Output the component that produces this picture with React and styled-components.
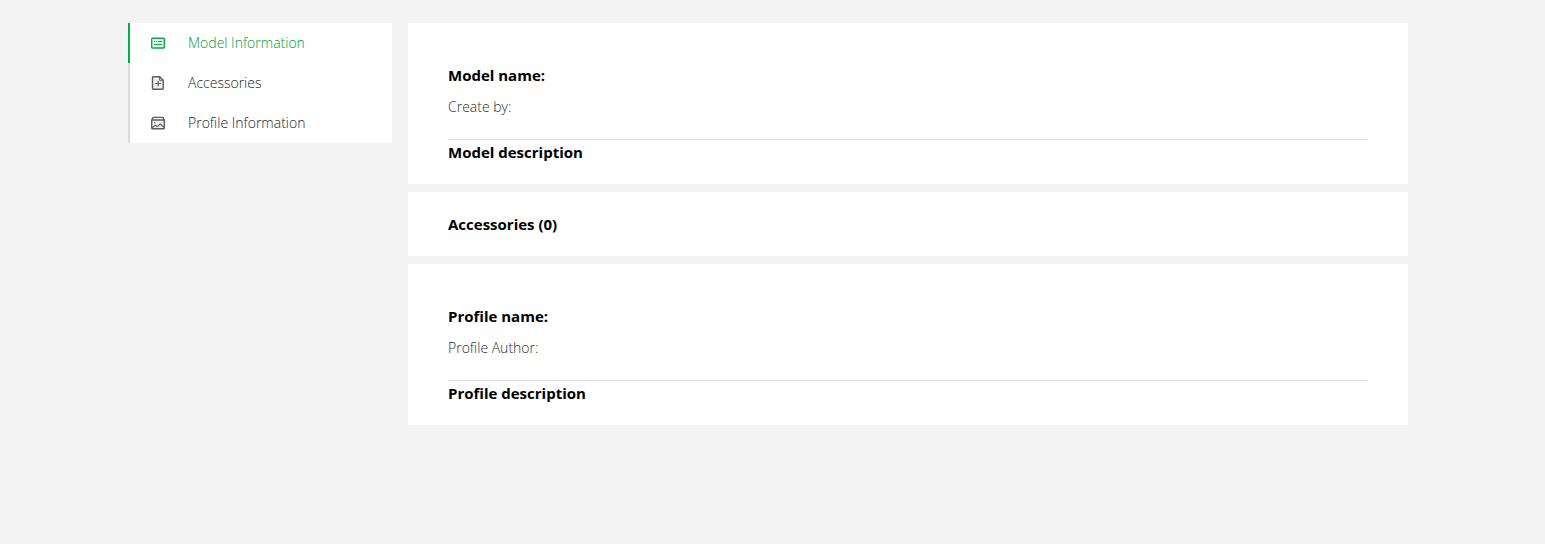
import styled, { createGlobalStyle } from 'styled-components';

const GlobalStyle = createGlobalStyle`
    * {
        box-sizing: border-box;
    }

    body {
        margin: 0;
        background-color: #f4f4f4;
        color: #000;
        font-family: 'Segoe UI', 'Open Sans', 'Noto Sans', sans-serif;
        font-size: 14px;
        font-weight: 300;
    }
`;

const Page = styled.div`
    padding: 23px 9px 23px 0;
`;

const Layout = styled.div`
    display: flex;
    align-items: flex-start;
    gap: 16px;
    max-width: 1280px;
    margin: 0 auto;
`;

const Sidebar = styled.nav`
    flex: 0 0 264px;
    background-color: #fff;
`;

const MenuLink = styled.a`
    display: flex;
    align-items: center;
    gap: 22px;
    height: 40px;
    padding: 0 20px;
    border-left: 2px solid ${({ $active }) => ($active ? '#00ae42' : '#dbdbdb')};
    color: ${({ $active }) => ($active ? '#00ae42' : '#5c5c5c')};
    line-height: 20px;
    text-decoration: none;

    svg {
        flex: none;
    }
`;

const MenuLabel = styled.span`
    color: ${({ $active }) => ($active ? '#009a34' : '#1c1c1c')};
`;

const Content = styled.main`
    display: flex;
    flex: 1;
    flex-direction: column;
    gap: 8px;
    min-width: 0;
`;

const Card = styled.section`
    padding: ${({ $compact }) => ($compact ? '20px 40px' : '40px 40px 20px')};
    background-color: #fff;
`;

const Title = styled.h2`
    margin: 0;
    font-size: 15px;
    font-weight: 700;
    line-height: 24px;
`;

const Author = styled.p`
    margin: 8px 0 0;
    padding-bottom: 20px;
    border-bottom: 1px solid #dbdbdb;
    color: #2c2c2c;
    line-height: 24px;
`;

const Icon = ({ children }) => (
    <svg
        width='16'
        height='16'
        viewBox='0 0 16 16'
        fill='none'
        stroke='currentColor'
        strokeWidth='1.4'
        strokeLinejoin='round'
        aria-hidden='true'>
        {children}
    </svg>
);

const ModelIcon = () => (
    <Icon>
        <rect
            x='1.7'
            y='3.2'
            width='12.6'
            height='9.8'
            rx='0.8'
            fill='currentColor'
            fillOpacity='0.1'
        />
        <path d='M4 6.5h1.1M6.1 6.5h1.1M8.4 6.5H12M4 9.6h8' strokeWidth='1' />
    </Icon>
);

const AccessoriesIcon = () => (
    <Icon>
        <path
            d='M3.2 1.7h6.5l3.5 3.5v8.4a.7.7 0 0 1-.7.7H3.2a.7.7 0 0 1-.7-.7V2.4a.7.7 0 0 1 .7-.7z'
            fill='currentColor'
            fillOpacity='0.1'
        />
        <path d='M9.6 1.9v3.4H13' strokeWidth='1' />
        <path d='M8.2 5.7v5.6M5.4 8.5H11' strokeWidth='1.2' />
    </Icon>
);

const ProfileIcon = () => (
    <Icon>
        <path
            d='M1.7 5h12.6v8.1a.7.7 0 0 1-.7.7H2.4a.7.7 0 0 1-.7-.7z'
            fill='currentColor'
            fillOpacity='0.08'
        />
        <path d='M2 5l.9-2.6h10.2L14 5' />
        <path d='M2 12.8l3.6-2.6 1.6 1.4 3-2.6 3.8 3.4' strokeWidth='1.1' />
        <circle cx='4.8' cy='7.7' r='0.8' fill='currentColor' stroke='none' />
    </Icon>
);

const menu = [
    { id: 'model', label: 'Model Information', icon: ModelIcon },
    { id: 'accessories', label: 'Accessories', icon: AccessoriesIcon },
    { id: 'profile', label: 'Profile Information', icon: ProfileIcon },
];

const App = () => {
    const active = 'model';

    return (
        <Page>
            <GlobalStyle />
            <Layout>
                <Sidebar>
                    {menu.map(({ id, label, icon: ItemIcon }) => (
                        <MenuLink
                            key={id}
                            href={`#${id}`}
                            $active={id === active}>
                            <ItemIcon />
                            <MenuLabel $active={id === active}>
                                {label}
                            </MenuLabel>
                        </MenuLink>
                    ))}
                </Sidebar>
                <Content>
                    <Card id='model'>
                        <Title>Model name:</Title>
                        <Author>Create by:</Author>
                        <Title>Model description</Title>
                    </Card>
                    <Card id='accessories' $compact>
                        <Title>Accessories (0)</Title>
                    </Card>
                    <Card id='profile'>
                        <Title>Profile name:</Title>
                        <Author>Profile Author:</Author>
                        <Title>Profile description</Title>
                    </Card>
                </Content>
            </Layout>
        </Page>
    );
};

export default App;
